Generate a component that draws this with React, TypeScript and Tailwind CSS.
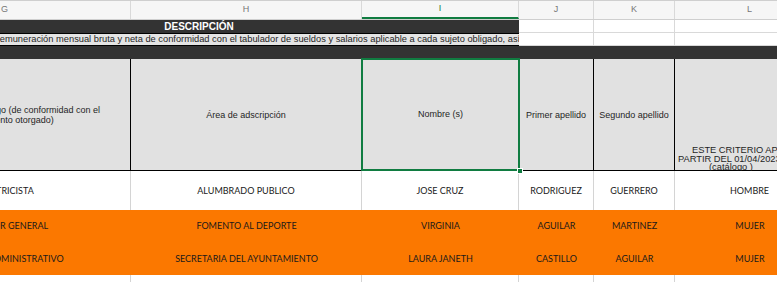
import type { ReactNode } from 'react';

const W = ['w-[252px]', 'w-[231px]', 'w-[157px]', 'w-[75px]', 'w-[81px]', 'w-[150px]'];
const LETTERS = ['G', 'H', 'I', 'J', 'K', 'L'];

const rows = [
  { bg: 'bg-white', h: 'h-[39px]', cells: ['ELECTRICISTA', 'ALUMBRADO PUBLICO', 'JOSE CRUZ', 'RODRIGUEZ', 'GUERRERO', 'HOMBRE'] },
  { bg: 'bg-[#fb7800]', h: 'h-[32px]', cells: ['DIRECTOR GENERAL', 'FOMENTO AL DEPORTE', 'VIRGINIA', 'AGUILAR', 'MARTINEZ', 'MUJER'] },
  { bg: 'bg-[#fb7800]', h: 'h-[33px]', cells: ['AUXILIAR ADMINISTRATIVO', 'SECRETARIA DEL AYUNTAMIENTO', 'LAURA JANETH', 'CASTILLO', 'AGUILAR', 'MUJER'] },
];

function HeadCell({ i, children }: { i: number; children?: ReactNode }) {
  return (
    <div
      className={`${W[i]} shrink-0 h-full border-r border-black bg-[#e1e1e1] flex items-center justify-center text-center px-1 leading-[10px]`}
    >
      {children}
    </div>
  );
}

export default function App() {
  return (
    <div className="w-[777px] h-[282px] overflow-hidden bg-white text-[#1f1f1f] font-['Liberation_Sans',Arial,sans-serif]">
      <div className="ml-[-121px] w-[946px] flex flex-col">
        {/* column letters */}
        <div className="flex h-[20px] bg-[#f6f6f6] border-t border-b border-[#cfcfcf]">
          {LETTERS.map((l, i) => (
            <div
              key={l}
              className={`${W[i]} shrink-0 h-full border-r border-[#d9d9d9] flex items-center justify-center text-[9px] ${
                l === 'I' ? 'text-[#107c41] border-b-2 border-b-[#107c41]' : 'text-[#777]'
              }`}
            >
              {l}
            </div>
          ))}
        </div>

        {/* row 1 */}
        <div className="flex h-[13px]">
          <div className="w-[640px] shrink-0 bg-[#333] text-white font-bold text-[10px] leading-[13px] text-center">
            DESCRIPCIÓN
          </div>
          {[3, 4, 5].map((i) => (
            <div key={i} className={`${W[i]} shrink-0 border-r border-b border-[#d9d9d9]`} />
          ))}
        </div>

        {/* row 2 */}
        <div className="flex h-[13px]">
          <div className="w-[640px] shrink-0 bg-[#e4e4e4] border-y border-black overflow-hidden whitespace-nowrap text-[9.3px] leading-[11px] pl-[114px]">
            Remuneración mensual bruta y neta de conformidad con el tabulador de sueldos y salarios aplicable a cada sujeto obligado, así como su periodicidad
          </div>
          {[3, 4, 5].map((i) => (
            <div key={i} className={`${W[i]} shrink-0 border-r border-b border-[#d9d9d9]`} />
          ))}
        </div>

        {/* row 3 */}
        <div className="h-[13px] bg-[#333]" />

        {/* header row */}
        <div className="flex h-[112px] border-b border-black text-[9px]">
          <HeadCell i={0}>
            Denominación del cargo (de conformidad con el
            <br />
            nombramiento otorgado)
          </HeadCell>
          <HeadCell i={1}>Área de adscripción</HeadCell>
          <div className={`${W[2]} shrink-0 h-full relative bg-[#e1e1e1] flex items-center justify-center`}>
            Nombre (s)
            <div className="absolute -top-px -left-px -right-px -bottom-px border-2 border-[#107c41]" />
            <div className="absolute right-[-4px] bottom-[-4px] w-[6px] h-[6px] bg-[#107c41] border border-white" />
          </div>
          <HeadCell i={3}>Primer apellido</HeadCell>
          <HeadCell i={4}>Segundo apellido</HeadCell>
          <div className={`${W[5]} shrink-0 h-full bg-[#e1e1e1] flex flex-col justify-end whitespace-nowrap text-[9.3px] leading-[8.6px]`}>
            <div className="pl-[17px]">ESTE CRITERIO APLICA A</div>
            <div className="pl-[3px]">PARTIR DEL 01/04/2023 -&gt; Sexo</div>
            <div className="pl-[34px] mb-[-2px]">(catálogo )</div>
          </div>
        </div>

        {/* data rows */}
        {rows.map((r, ri) => (
          <div key={ri} className={`flex ${r.h} ${r.bg} font-['Lato',sans-serif] text-[9px] text-[#1a1a1a]`}>
            {r.cells.map((c, i) => (
              <div
                key={i}
                className={`${W[i]} shrink-0 h-full flex items-center justify-center whitespace-nowrap ${
                  ri === 0 ? 'border-r border-[#d4d4d4]' : ''
                }`}
              >
                {c}
              </div>
            ))}
          </div>
        ))}

        {/* row 8 */}
        <div className="flex h-[20px]">
          {W.map((w, i) => (
            <div key={i} className={`${w} shrink-0 border-r border-[#d4d4d4]`} />
          ))}
        </div>
      </div>
    </div>
  );
}
